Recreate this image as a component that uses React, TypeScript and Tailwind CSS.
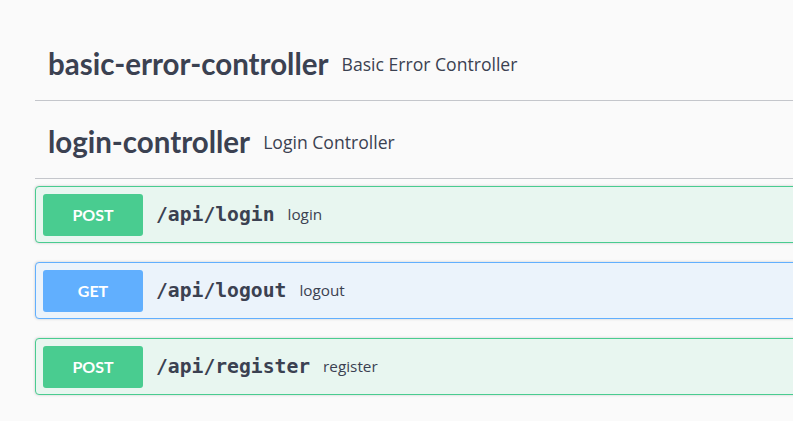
import React from 'react';

type Op = { method: 'POST' | 'GET'; path: string; summary: string };

const ops: Op[] = [
  { method: 'POST', path: '/api/login', summary: 'login' },
  { method: 'GET', path: '/api/logout', summary: 'logout' },
  { method: 'POST', path: '/api/register', summary: 'register' },
];

const sans = { fontFamily: '"Open Sans", "Liberation Sans", sans-serif' };

function TagHeader({ name, desc }: { name: string; desc: string }) {
  return (
    <div className="flex h-[78px] items-center border-b border-[#c4c6cb] pl-[13px] pt-[6px]">
      <span
        className="text-[29.5px] font-bold text-[#3b4151]"
        style={{ fontFamily: 'Lato, "Open Sans", sans-serif' }}
      >
        {name}
      </span>
      <span className="ml-[13px] text-[17.6px] text-[#3b4151]" style={sans}>
        {desc}
      </span>
    </div>
  );
}

function OpBlock({ op }: { op: Op }) {
  const post = op.method === 'POST';
  return (
    <div
      className={`flex h-[57px] items-center rounded-[4px] border pl-[7px] shadow-[0_0_3px_rgba(0,0,0,0.19)] ${
        post ? 'border-[#49cc90] bg-[#e8f6f0]' : 'border-[#61affe] bg-[#ebf3fb]'
      }`}
    >
      <div
        className={`flex h-[42px] w-[100px] items-center justify-center rounded-[3px] text-[16px] font-bold text-white ${
          post ? 'bg-[#49cc90]' : 'bg-[#61affe]'
        }`}
        style={{ fontFamily: 'Lato, "Open Sans", sans-serif' }}
      >
        {op.method}
      </div>
      <span
        className="ml-[13px] text-[19.7px] font-bold text-[#3b4151]"
        style={{ fontFamily: '"DejaVu Sans Mono", "Liberation Mono", monospace' }}
      >
        {op.path}
      </span>
      <span className="ml-[13px] text-[15.3px] text-[#3b4151]" style={sans}>
        {op.summary}
      </span>
    </div>
  );
}

export default function App() {
  return (
    <div className="h-[421px] w-[793px] overflow-hidden bg-[#fafafa]">
      <div className="w-[1100px] pl-[35px] pt-[23px]">
        <TagHeader name="basic-error-controller" desc="Basic Error Controller" />
        <TagHeader name="login-controller" desc="Login Controller" />
        <div className="flex flex-col gap-[19px] pt-[7px]">
          {ops.map((op) => (
            <OpBlock key={op.path} op={op} />
          ))}
        </div>
      </div>
    </div>
  );
}
